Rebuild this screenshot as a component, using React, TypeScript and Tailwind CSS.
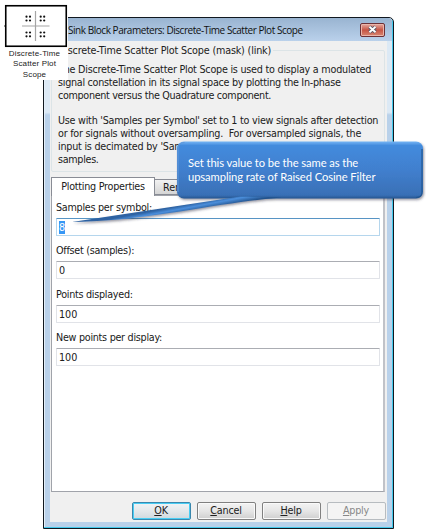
import React from "react";

const description = [
  { text: "The Discrete-Time Scatter Plot Scope is used to display a modulated", spacing: "tracking-[-0.23px]" },
  { text: "signal constellation in its signal space by plotting the In-phase", spacing: "tracking-[-0.275px]" },
  { text: "component versus the Quadrature component.", spacing: "tracking-[-0.32px]" },
  { text: "\u00a0", spacing: "" },
  { text: "Use with 'Samples per Symbol' set to 1 to view signals after detection", spacing: "tracking-[-0.24px]" },
  { text: "or for signals without oversampling.\u00a0 For oversampled signals, the", spacing: "tracking-[-0.23px]" },
  { text: "input is decimated by 'Sam", spacing: "tracking-[-0.23px]" },
  { text: "samples.", spacing: "tracking-[-0.3px]" },
];

function Field({ label, value, active = false }: { label: string; value: string; active?: boolean }) {
  return (
    <div className="h-[43.4px]">
      <div className="h-[17px] leading-[14px] tracking-[-0.27px]">{label}</div>
      <div
        className={`flex h-[18px] w-[324px] items-center rounded-[1px] border bg-white pl-[2px] ${
          active ? "border-[#b5d6ed] border-t-[#5794c4]" : "border-[#e1e3e8] border-t-[#abadb3]"
        }`}
      >
        <span className={`leading-[13px] ${active ? "bg-[#3797f5] text-white" : "pt-px"}`}>{value}</span>
      </div>
    </div>
  );
}

function DialogButton({ mnemonic, rest, kind = "normal" }: { mnemonic: string; rest: string; kind?: "normal" | "primary" | "disabled" }) {
  const looks = {
    normal: "border-[#808080] bg-linear-to-b from-[#f3f3f3] via-[#e6e6e6] to-[#cfcfcf] shadow-[inset_0_0_0_1px_#fafafa]",
    primary: "border-[#3987ad] bg-linear-to-b from-[#f0f3f5] via-[#e3e8eb] to-[#cfd9de] shadow-[inset_0_0_0_1px_#48cdf4]",
    disabled: "border-[#b7bcc0] bg-[#f4f4f4] text-[#888]",
  };
  return (
    <button className={`flex h-[18px] w-[59px] items-center justify-center rounded-[2px] border pr-px leading-none tracking-[-0.2px] ${looks[kind]}`}>
      <span className="underline underline-offset-1">{mnemonic}</span>
      {rest}
    </button>
  );
}

function ScopeBlock() {
  return (
    <div className="absolute left-0 top-0 h-[80px] w-[68px] bg-white">
      <svg className="block" width="68" height="49" viewBox="0 0 68 49">
        <path d="M4 26h2" stroke="#333" />
        <rect x="5.75" y="5.75" width="60.5" height="40.5" fill="#fff" stroke="#000" strokeWidth="1.6" />
        <path d="M22 26h27.500M35.500 11v30" stroke="#a5a5a5" strokeWidth="1.2" fill="none" />
        <g fill="#111">
          {[26.5, 30, 40.7, 44.2].map((x) =>
            [16.7, 20.5, 32.5, 36.3].map((y) => <circle key={`${x}-${y}`} cx={x} cy={y} r="1.1" />)
          )}
        </g>
      </svg>
      <div className="w-[69px] text-center font-['Liberation_Sans',sans-serif] text-[8px] leading-[10.4px] tracking-[0.15px] whitespace-nowrap text-[#222]">
        Discrete-Time
        <br />
        Scatter Plot
        <br />
        Scope
      </div>
    </div>
  );
}

function Callout() {
  return (
    <div className="absolute left-[60px] top-[138px] h-[95px] w-[367px]">
      <svg className="absolute inset-0" width="367" height="95" viewBox="0 0 367 95">
        <defs>
          <linearGradient id="face" x1="0" y1="0" x2="0" y2="1">
            <stop offset="0" stopColor="#75b5f5" />
            <stop offset=".07" stopColor="#438bdd" />
            <stop offset=".5" stopColor="#417fce" />
            <stop offset=".94" stopColor="#3970b6" />
            <stop offset="1" stopColor="#23558f" />
          </linearGradient>
          <linearGradient id="tail" gradientUnits="userSpaceOnUse" x1="135" y1="65" x2="136.500" y2="73">
            <stop offset="0" stopColor="#2d62a2" />
            <stop offset=".4" stopColor="#4b8edb" />
            <stop offset="1" stopColor="#21528c" />
          </linearGradient>
          <filter id="shade" x="-5%" y="-10%" width="112%" height="130%">
            <feDropShadow dx="1" dy="1.5" stdDeviation="1" floodColor="#334" floodOpacity=".5" />
          </filter>
        </defs>
        <g filter="url(#shade)">
          <rect x="117" y="3.5" width="246" height="57" rx="7" fill="url(#face)" />
          <path d="M118 54V11Q118 4.500 124.500 4.500" fill="none" stroke="#6299d8" strokeWidth="1" />
          <path d="M362 11V54Q362 59.500 356 59.500" fill="none" stroke="#245791" strokeWidth="1.2" />
          <path d="M12 84 L180 58.500 L222 59.500 C190 62 160 67 120 73.500 Q50 84 12 84Z" fill="url(#tail)" />
        </g>
      </svg>
      <div className="relative pl-[128px] pt-[18px] font-['Lato','Open_Sans',sans-serif] text-[11.200px] leading-[14.200px] tracking-[-0.08px] whitespace-nowrap text-white">
        <div>Set this value to be the same as the</div>
        <div>upsampling rate of Raised Cosine Filter</div>
      </div>
    </div>
  );
}

export default function App() {
  return (
    <div className="relative h-[532px] w-[427px] overflow-hidden bg-white pl-[43px] pt-[17px] font-['DejaVu_Sans_Condensed','DejaVu_Sans',sans-serif] text-[10.7px] whitespace-nowrap text-[#202020]">
      <main className="flex h-[512px] w-[351px] flex-col rounded-t-[5px] border border-[#111820] bg-linear-to-b from-[#dce9f5] from-[18.500%] to-[#b9d1ea] to-[19%] px-[6px] pb-[6px] shadow-[inset_-1px_-1px_0_#43c9ec,inset_1px_1px_0_#e4eff9]">
        <header className="-mx-[5px] flex h-[23px] shrink-0 items-center justify-between rounded-t-[4px] bg-linear-to-b from-[#99b4d1] to-[#bad1eb] pl-[23px] pr-[7px]">
          <h1 className="pt-px font-['Open_Sans','Noto_Sans',sans-serif] text-[10px] tracking-[-0.46px] text-[#101010]">Sink Block Parameters: Discrete-Time Scatter Plot Scope</h1>
          <button className="flex h-[14px] w-[25px] items-center justify-center rounded-[2px] border border-[#6c3137] bg-linear-to-b from-[#e4aaa2] via-[#c65444] to-[#d88772] shadow-[inset_0_0_0_1px_#eab5aa]">
            <svg width="11" height="9" viewBox="0 0 11 9">
              <path d="M2.500 1.800 8.500 7.200M8.500 1.800 2.500 7.200" stroke="#535666" strokeWidth="3.600" />
              <path d="M2.500 1.800 8.500 7.200M8.500 1.800 2.500 7.200" stroke="#fff" strokeWidth="1.900" />
            </svg>
          </button>
        </header>
        <section className="flex min-h-0 flex-1 flex-col bg-[#f0f0f0] pl-px">
          <fieldset className="mt-[2px] h-[129px] w-[334px] min-w-0 rounded-[2px] border border-[#dce4e7] pl-[6px]">
            <legend className="h-[14px] pr-[2px] pt-px leading-[14px] tracking-[-0.17px]">Discrete-Time Scatter Plot Scope (mask) (link)</legend>
            <div className="pt-[7px] leading-[12.800px]">
              {description.map((line, index) => (
                <p key={index} className={line.spacing}>{line.text}</p>
              ))}
            </div>
          </fieldset>
          <div className="mt-[5px] flex h-[18px] items-end">
            <div className="z-10 -mb-px flex h-[19px] w-[104px] items-center justify-center border border-b-0 border-[#898c95] bg-white tracking-[-0.25px]">Plotting Properties</div>
            <div className="h-[16px] w-[111px] border border-l-0 border-[#898c95] bg-linear-to-b from-[#f2f2f2] to-[#d5d5d5] pl-[8px] leading-[15px]">Ren</div>
          </div>
          <div className="h-[297px] w-[334px] shrink-0 border border-r-2 border-[#a0a3aa] border-r-[#c0c2c8] bg-white pl-[4px] pt-[5px]">
            <Field label="Samples per symbol:" value="8" active />
            <Field label="Offset (samples):" value="0" />
            <Field label="Points displayed:" value="100" />
            <Field label="New points per display:" value="100" />
          </div>
          <footer className="mt-[10px] flex gap-[6px] pl-[81px]">
            <DialogButton mnemonic="O" rest="K" kind="primary" />
            <DialogButton mnemonic="C" rest="ancel" />
            <DialogButton mnemonic="H" rest="elp" />
            <DialogButton mnemonic="A" rest="pply" kind="disabled" />
          </footer>
        </section>
      </main>
      <ScopeBlock />
      <Callout />
    </div>
  );
}
